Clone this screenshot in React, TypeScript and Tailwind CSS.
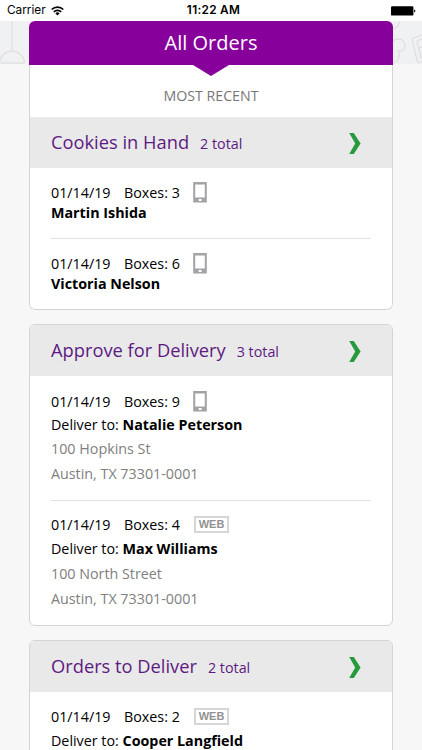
import clsx from "clsx";

interface Order {
  date: string;
  boxes: number;
  source: "mobile" | "web";
  name: string;
  address?: string[];
}

interface OrderSection {
  title: string;
  total: number;
  orders: Order[];
}

const RECENT: OrderSection = {
  title: "Cookies in Hand",
  total: 2,
  orders: [
    { date: "01/14/19", boxes: 3, source: "mobile", name: "Martin Ishida" },
    { date: "01/14/19", boxes: 6, source: "mobile", name: "Victoria Nelson" },
  ],
};

const APPROVE: OrderSection = {
  title: "Approve for Delivery",
  total: 3,
  orders: [
    {
      date: "01/14/19",
      boxes: 9,
      source: "mobile",
      name: "Natalie Peterson",
      address: ["100 Hopkins St", "Austin, TX 73301-0001"],
    },
    {
      date: "01/14/19",
      boxes: 4,
      source: "web",
      name: "Max Williams",
      address: ["100 North Street", "Austin, TX 73301-0001"],
    },
  ],
};

const DELIVER: OrderSection = {
  title: "Orders to Deliver",
  total: 2,
  orders: [{ date: "01/14/19", boxes: 2, source: "web", name: "Cooper Langfield", address: [] }],
};

// ─── Icons ───────────────────────────────────────────────
function WifiIcon() {
  return (
    <svg viewBox="0 0 13 10" className="h-2.5 w-[13px]" fill="none" stroke="#000" strokeWidth="1.7">
      <path d="M.7 3.5a8.3 8.3 0 0 1 11.6 0" />
      <path d="M2.8 5.8a5.3 5.3 0 0 1 7.4 0" />
      <path d="M6.5 9.5 4.4 7.4a3 3 0 0 1 4.2 0z" fill="#000" stroke="none" />
    </svg>
  );
}

function BatteryIcon() {
  return (
    <svg viewBox="0 0 25 10" className="h-2.5 w-[25px]">
      <rect x="0" y="0.2" width="22.4" height="9.4" rx="1.2" />
      <path d="M23.2 3.4c1.6.3 1.6 2.7 0 3z" />
    </svg>
  );
}

function PhoneIcon() {
  return (
    <svg viewBox="0 0 14 21" className="h-[21px] w-3.5">
      <path fill="#a3a2a4" fillRule="evenodd" d="M.2 0h13.6v20.6H.2V0zM2.2 2.4v13.2h9.6V2.4z" />
      <rect x="5.6" y="17" width="3" height="2" rx=".5" fill="#fff" />
    </svg>
  );
}

function WebBadge() {
  return (
    <span className="ml-px flex h-[17px] w-[35px] items-center justify-center border-2 border-[#d6d6d6] font-['Liberation_Sans'] text-[11px] leading-none font-bold text-[#929292]">
      WEB
    </span>
  );
}

function Chevron() {
  return (
    <svg viewBox="0 0 12 21" className="h-[21px] w-3" fill="#279a3e">
      <path d="M.2 0h4.6L11.6 10.500 4.8 21H.2L6.2 10.500z" />
    </svg>
  );
}

// ─── Header illustration behind the cards ────────────────
function Banner() {
  return (
    <div className="absolute inset-x-0 top-[21px] flex h-[43px] justify-between bg-[#f0f1f2]">
      <svg viewBox="0 0 29 43" className="h-[43px] w-[29px]" fill="none" stroke="#dedcda" strokeWidth="1.1">
        <path d="M12 0v30M0 40c1-5 5-10 12-10s11 5 12.5 10.5c.3 1-.5 1.500-1.500 1.500H0" />
      </svg>
      <svg viewBox="0 0 29 43" className="h-[43px] w-[29px]" fill="none" stroke="#dedddd" strokeWidth="1.1">
        <path d="M7 0C6 4 4 7 0 8M0 21c1-4 10-4 11.500 1 1.500 5-1 9-6.500 8 3 4 0 11-5 12" />
        <path d="M29 14 20.500 17c-1 .5-1.500 1.500-1 3l4.500 19c.5 2 1.500 3 3 2.500l2-1M29 18l-5 2 4 17 1-.5M26 27l3-1" />
      </svg>
    </div>
  );
}

function OrderItem({ order }: { order: Order }) {
  const web = order.source === "web";
  return (
    <div className="text-[14.3px] text-black">
      <div className={clsx("flex items-center", order.address ? "h-[25px]" : "h-[21px]")}>
        <span className="w-[73px]">{order.date}</span>
        <span className="w-[69px]">Boxes: {order.boxes}</span>
        {web ? <WebBadge /> : <PhoneIcon />}
      </div>
      {order.address ? (
        <>
          <div className={web ? "h-6 leading-6" : "h-[22px] leading-[21px]"}>
            Deliver to: <b className="font-bold">{order.name}</b>
          </div>
          {order.address.map((line) => (
            <div key={line} className="h-[24.5px] leading-[25px] text-[#808080]">
              {line}
            </div>
          ))}
        </>
      ) : (
        <div className="h-5 leading-5 font-bold">{order.name}</div>
      )}
    </div>
  );
}

function SectionHeader({ section }: { section: OrderSection }) {
  return (
    <div className="flex h-[51px] items-center bg-[#e9e9e9] pr-[31px] pl-[21px] text-[#5d1a82]">
      <h2 className="-mt-px text-[18.3px]">{section.title}</h2>
      <span className="mt-0.5 ml-[11px] text-[14.3px]">{section.total} total</span>
      <span className="ml-auto pt-px">
        <Chevron />
      </span>
    </div>
  );
}

export default function App() {
  return (
    <div className="relative h-[750px] overflow-hidden bg-[#f7f7f7] font-['Open_Sans',sans-serif] whitespace-nowrap">
      <Banner />

      <div className="relative flex h-[21px] items-center justify-between bg-white pt-px pr-1.5 pl-[7px] font-['Inter',sans-serif] text-[11.8px] text-black">
        <div className="flex flex-1 items-center gap-[5px]">
          Carrier
          <WifiIcon />
        </div>
        <div className="ml-1 font-semibold tracking-[.3px]">11:22 AM</div>
        <div className="flex flex-1 justify-end">
          <BatteryIcon />
        </div>
      </div>

      <main className="relative mx-[29px]">
        <section className="h-[289px] overflow-hidden rounded-md bg-white">
          <h1 className="flex h-11 items-center justify-center bg-[#88009c] text-xl text-white">All Orders</h1>
          <div className="h-[245px] rounded-b-md border border-t-0 border-[#d4d4d4]">
            <svg viewBox="0 0 36 11" className="mx-auto h-[11px] w-9" fill="#88009c">
              <path d="M0 0h36L18 11z" />
            </svg>
            <p className="mb-[11px] h-[30px] pt-[9px] text-center text-[14.2px] text-[#777]">MOST RECENT</p>
            <SectionHeader section={RECENT} />
            <div className="px-[21px] pt-[14px]">
              <OrderItem order={RECENT.orders[0]} />
              <hr className="mt-[15px] mb-3.5 border-[#e3e3e3]" />
              <OrderItem order={RECENT.orders[1]} />
            </div>
          </div>
        </section>

        <section className="mt-3.5 h-[302px] overflow-hidden rounded-md border border-[#d4d4d4] bg-white">
          <SectionHeader section={APPROVE} />
          <div className="px-[21px] pt-[13px]">
            <OrderItem order={APPROVE.orders[0]} />
            <hr className="mt-[15px] mb-[11px] border-[#e3e3e3]" />
            <OrderItem order={APPROVE.orders[1]} />
          </div>
        </section>

        <section className="mt-3.5 h-[302px] overflow-hidden rounded-md border border-[#d4d4d4] bg-white">
          <SectionHeader section={DELIVER} />
          <div className="px-[21px] pt-3">
            <OrderItem order={DELIVER.orders[0]} />
          </div>
        </section>
      </main>
    </div>
  );
}
